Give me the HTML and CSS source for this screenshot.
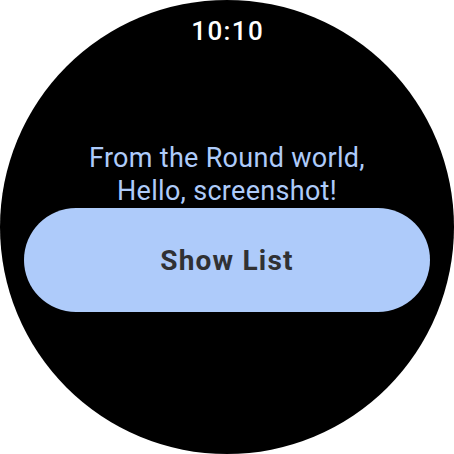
FILE: index.html
```html
<!DOCTYPE html>
<html>
<head>
<meta charset="utf-8">
<link rel="stylesheet" href="styles.css">
</head>
<body>
<div class="watch">
  <div class="time">10:10</div>
  <div class="content">
    <p class="greeting">From the Round world,<br>Hello, screenshot!</p>
    <div class="chip">Show List</div>
  </div>
</div>
</body>
</html>
```

FILE: styles.css
```css
html, body {
  margin: 0;
  padding: 0;
  background: #ffffff;
}
body {
  width: 454px;
  height: 454px;
  overflow: hidden;
  font-family: Roboto, "Noto Sans", sans-serif;
}
.watch {
  width: 454px;
  height: 454px;
  border-radius: 50%;
  background: #000000;
  display: flex;
  flex-direction: column;
  align-items: center;
  box-sizing: border-box;
}
.time {
  margin-top: 16px;
  color: #ffffff;
  font-size: 26px;
  font-weight: 500;
  line-height: 30px;
  letter-spacing: 1.4px;
  padding-left: 1.4px;
}
.content {
  margin-top: 96px;
  width: 406px;
  display: flex;
  flex-direction: column;
  align-items: center;
}
.greeting {
  margin: 0;
  color: #aecbfa;
  font-size: 27px;
  line-height: 33px;
  letter-spacing: 0.3px;
  text-align: center;
}
.chip {
  margin-top: 0;
  width: 406px;
  height: 104px;
  border-radius: 52px;
  background: #aecbfa;
  color: #303133;
  font-size: 28px;
  font-weight: 700;
  letter-spacing: 1.2px;
  display: flex;
  align-items: center;
  justify-content: center;
}
```
